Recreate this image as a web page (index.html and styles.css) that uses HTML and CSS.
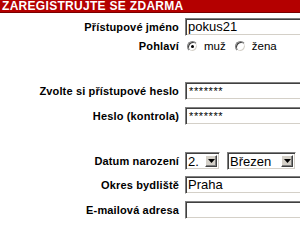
FILE: index.html
```html
<!DOCTYPE html>
<html lang="cs">
<head>
<meta charset="utf-8">
<link rel="stylesheet" href="styles.css">
</head>
<body>
<div class="page">
  <div class="header">ZAREGISTRUJTE SE ZDARMA</div>
  <div class="form">
    <div class="row r1">
      <div class="label">Přístupové jméno</div>
      <div class="field"><div class="input">pokus21</div></div>
    </div>
    <div class="row r2">
      <div class="label">Pohlaví</div>
      <div class="field radios">
        <span class="radio checked"></span><span class="rlabel">muž</span>
        <span class="radio"></span><span class="rlabel">žena</span>
      </div>
    </div>
    <div class="row r4">
      <div class="label">Zvolte si přístupové heslo</div>
      <div class="field"><div class="input pw">*******</div></div>
    </div>
    <div class="row r5">
      <div class="label">Heslo (kontrola)</div>
      <div class="field"><div class="input pw">*******</div></div>
    </div>
    <div class="row r7">
      <div class="label">Datum narození</div>
      <div class="field selects">
        <div class="select s-day"><span class="stext">2.</span><span class="sbtn"><svg width="7" height="4" viewBox="0 0 7 4"><path d="M0 0H7L3.5 4Z" fill="#000"/></svg></span></div>
        <div class="select s-month"><span class="stext">Březen</span><span class="sbtn"><svg width="7" height="4" viewBox="0 0 7 4"><path d="M0 0H7L3.5 4Z" fill="#000"/></svg></span></div>
      </div>
    </div>
    <div class="row r8">
      <div class="label">Okres bydliště</div>
      <div class="field"><div class="input">Praha</div></div>
    </div>
    <div class="row r9">
      <div class="label">E-mailová adresa</div>
      <div class="field"><div class="input"></div></div>
    </div>
  </div>
</div>
</body>
</html>
```

FILE: styles.css
```css
html, body {
  margin: 0;
  padding: 0;
  background: #ffffff;
}
.page {
  width: 300px;
  height: 225px;
  overflow: hidden;
  font-family: "Liberation Sans", Arial, sans-serif;
  color: #000;
}
.header {
  height: 12px;
  line-height: 13px;
  background: #b40000;
  border-bottom: 1px solid #7a0000;
  color: #ffffff;
  font-weight: bold;
  font-size: 12px;
  letter-spacing: 0.3px;
  padding-left: 2px;
  white-space: nowrap;
  overflow: hidden;
}
.form {
  display: flex;
  flex-direction: column;
}
.row {
  display: grid;
  grid-template-columns: 179px 1fr;
  column-gap: 6px;
  align-items: center;
  height: 22px;
}
.r1 { margin-top: 3px; }
.r2 { height: 16px; }
.r4 { margin-top: 26px; }
.r5 { margin-top: 3px; }
.r7 { margin-top: 23px; }
.r8 { margin-top: 2px; }
.r9 { margin-top: 3px; }
.label {
  text-align: right;
  font-weight: bold;
  font-size: 11px;
  letter-spacing: 0.15px;
  white-space: nowrap;
}
.field {
  display: flex;
  align-items: center;
  min-width: 0;
}
.input {
  box-sizing: border-box;
  width: 140px;
  flex: none;
  height: 18px;
  border-style: solid;
  border-width: 1px;
  border-color: #808080 #ffffff #ffffff #808080;
  box-shadow: inset 1px 1px 0 #404040, inset -1px -1px 0 #d4d0c8;
  padding: 0 2px;
  font-size: 13px;
  line-height: 16px;
  white-space: nowrap;
  background: #fff;
}
.pw {
  font-size: 11px;
  letter-spacing: 0.6px;
  padding-left: 3px;
}
.radios { gap: 0; }
.radio {
  box-sizing: border-box;
  width: 11px;
  height: 11px;
  border-radius: 50%;
  border: 1px solid;
  border-color: #808080 #ffffff #ffffff #808080;
  box-shadow: inset 1px 1px 0 #404040, inset -1px -1px 0 #d4d0c8;
  background: #fff;
  position: relative;
  margin-left: 2px;
  flex: none;
}
.radio + .rlabel { margin-left: 6px; }
.rlabel + .radio { margin-left: 9px; }
.radio.checked::after {
  content: "";
  position: absolute;
  left: 3px;
  top: 3px;
  width: 3px;
  height: 3px;
  border-radius: 50%;
  background: #000;
}
.rlabel {
  font-size: 11.5px;
}
.selects { gap: 7px; }
.select {
  box-sizing: border-box;
  height: 18px;
  display: flex;
  align-items: stretch;
  border-style: solid;
  border-width: 1px;
  border-color: #808080 #ffffff #ffffff #808080;
  box-shadow: inset 1px 1px 0 #404040, inset -1px -1px 0 #d4d0c8;
  padding: 2px;
  background: #fff;
  flex: none;
}
.s-day { width: 35px; }
.s-month { width: 69px; }
.stext {
  flex: 1;
  font-size: 13px;
  line-height: 14px;
  padding-left: 0;
  white-space: nowrap;
}
.sbtn {
  box-sizing: border-box;
  width: 12px;
  background: #d4d0c8;
  border-style: solid;
  border-width: 1px;
  border-color: #ffffff #404040 #404040 #ffffff;
  box-shadow: inset -1px -1px 0 #808080;
  display: flex;
  align-items: center;
  justify-content: center;
}
.sbtn svg { display: block; }
```
